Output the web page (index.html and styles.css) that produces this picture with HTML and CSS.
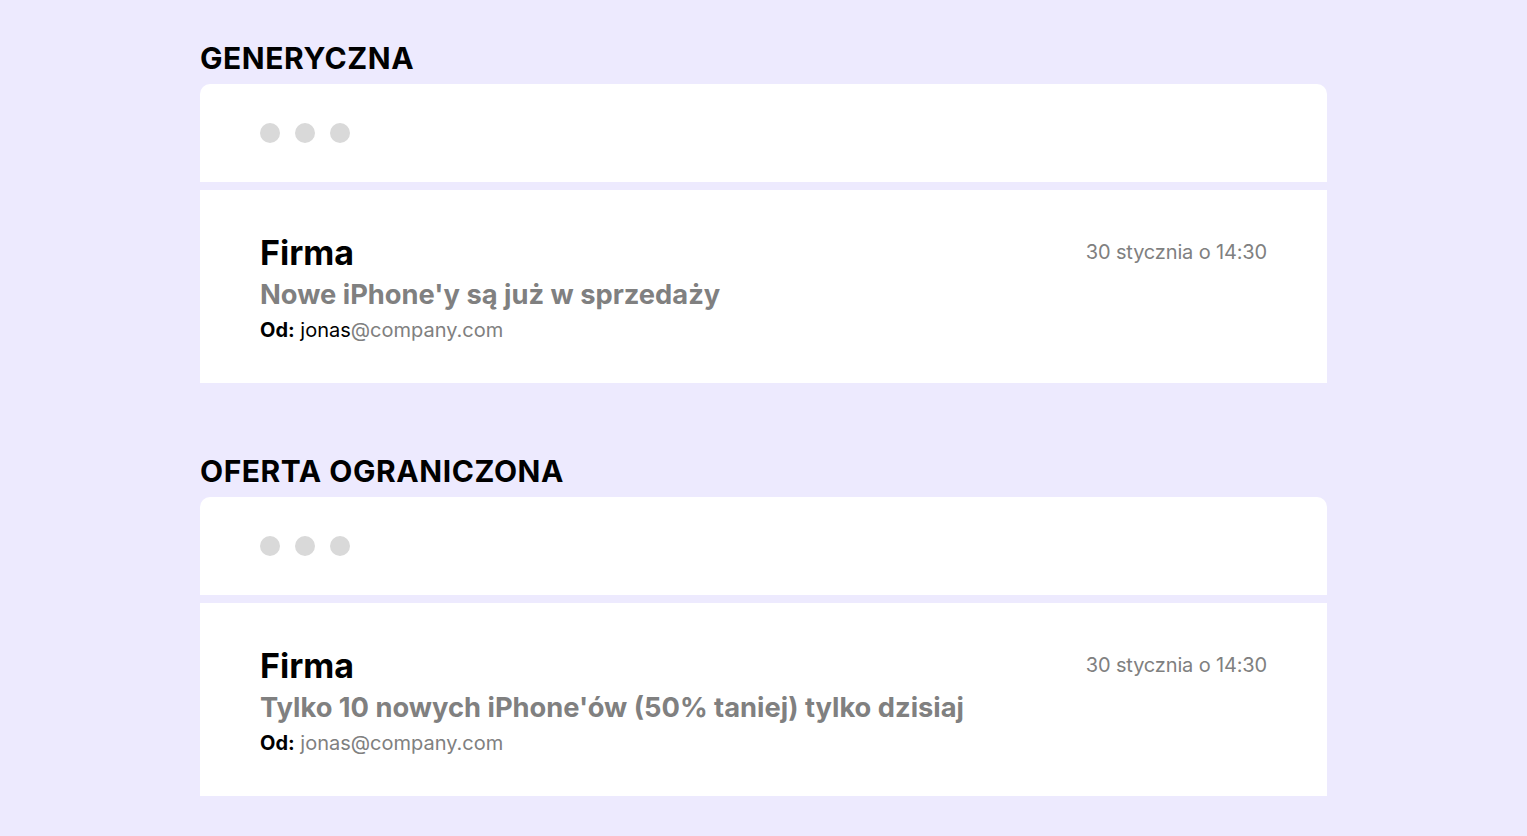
FILE: index.html
```html
<!DOCTYPE html>
<html lang="pl">
<head>
<meta charset="utf-8">
<link rel="stylesheet" href="styles.css">
</head>
<body>
<main class="page">
  <section class="section">
    <h2 class="section-title">GENERYCZNA</h2>
    <div class="window-bar">
      <span class="dot"></span><span class="dot"></span><span class="dot"></span>
    </div>
    <div class="mail">
      <div class="mail-main">
        <div class="sender">Firma</div>
        <div class="subject">Nowe iPhone'y są już w sprzedaży</div>
        <div class="from"><b>Od:</b> <span class="from-dark">jonas</span>@company.com</div>
      </div>
      <div class="date">30 stycznia o 14:30</div>
    </div>
  </section>
  <section class="section">
    <h2 class="section-title">OFERTA OGRANICZONA</h2>
    <div class="window-bar">
      <span class="dot"></span><span class="dot"></span><span class="dot"></span>
    </div>
    <div class="mail">
      <div class="mail-main">
        <div class="sender">Firma</div>
        <div class="subject">Tylko 10 nowych iPhone'ów (50% taniej) tylko dzisiaj</div>
        <div class="from"><b>Od:</b> jonas@company.com</div>
      </div>
      <div class="date">30 stycznia o 14:30</div>
    </div>
  </section>
</main>
</body>
</html>
```

FILE: styles.css
```css
* { box-sizing: border-box; }
html, body {
  margin: 0;
  padding: 0;
  background: #edeafe;
  font-family: Inter, "Noto Sans", sans-serif;
}
.page {
  width: 1127px;
  margin-left: 200px;
  padding-top: 40px;
  display: flex;
  flex-direction: column;
  gap: 70px;
}
.section {
  display: flex;
  flex-direction: column;
}
.section-title {
  margin: 0 0 8px;
  font-size: 30px;
  line-height: 36px;
  font-weight: 700;
  letter-spacing: 0.55px;
  color: #000;
}
.window-bar {
  background: #fff;
  height: 98px;
  border-radius: 10px 10px 0 0;
  display: flex;
  align-items: center;
  gap: 15px;
  padding-left: 60px;
  margin-bottom: 8px;
}
.dot {
  width: 20px;
  height: 20px;
  border-radius: 50%;
  background: #d9d9d9;
}
.mail {
  background: #fff;
  height: 193px;
  padding: 41px 60px 0;
  display: flex;
  justify-content: space-between;
  align-items: flex-start;
}
.mail-main {
  display: flex;
  flex-direction: column;
}
.sender {
  font-size: 34px;
  line-height: 44px;
  font-weight: 700;
  color: #000;
}
.subject {
  font-size: 27.3px;
  line-height: 40px;
  font-weight: 700;
  color: #808080;
}
.from {
  font-size: 20px;
  line-height: 30px;
  color: #808080;
}
.from b {
  font-weight: 700;
  color: #000;
}
.from-dark { color: #000; }
.date {
  margin-top: 6px;
  font-size: 20px;
  line-height: 30px;
  letter-spacing: -0.15px;
  color: #808080;
}
```
